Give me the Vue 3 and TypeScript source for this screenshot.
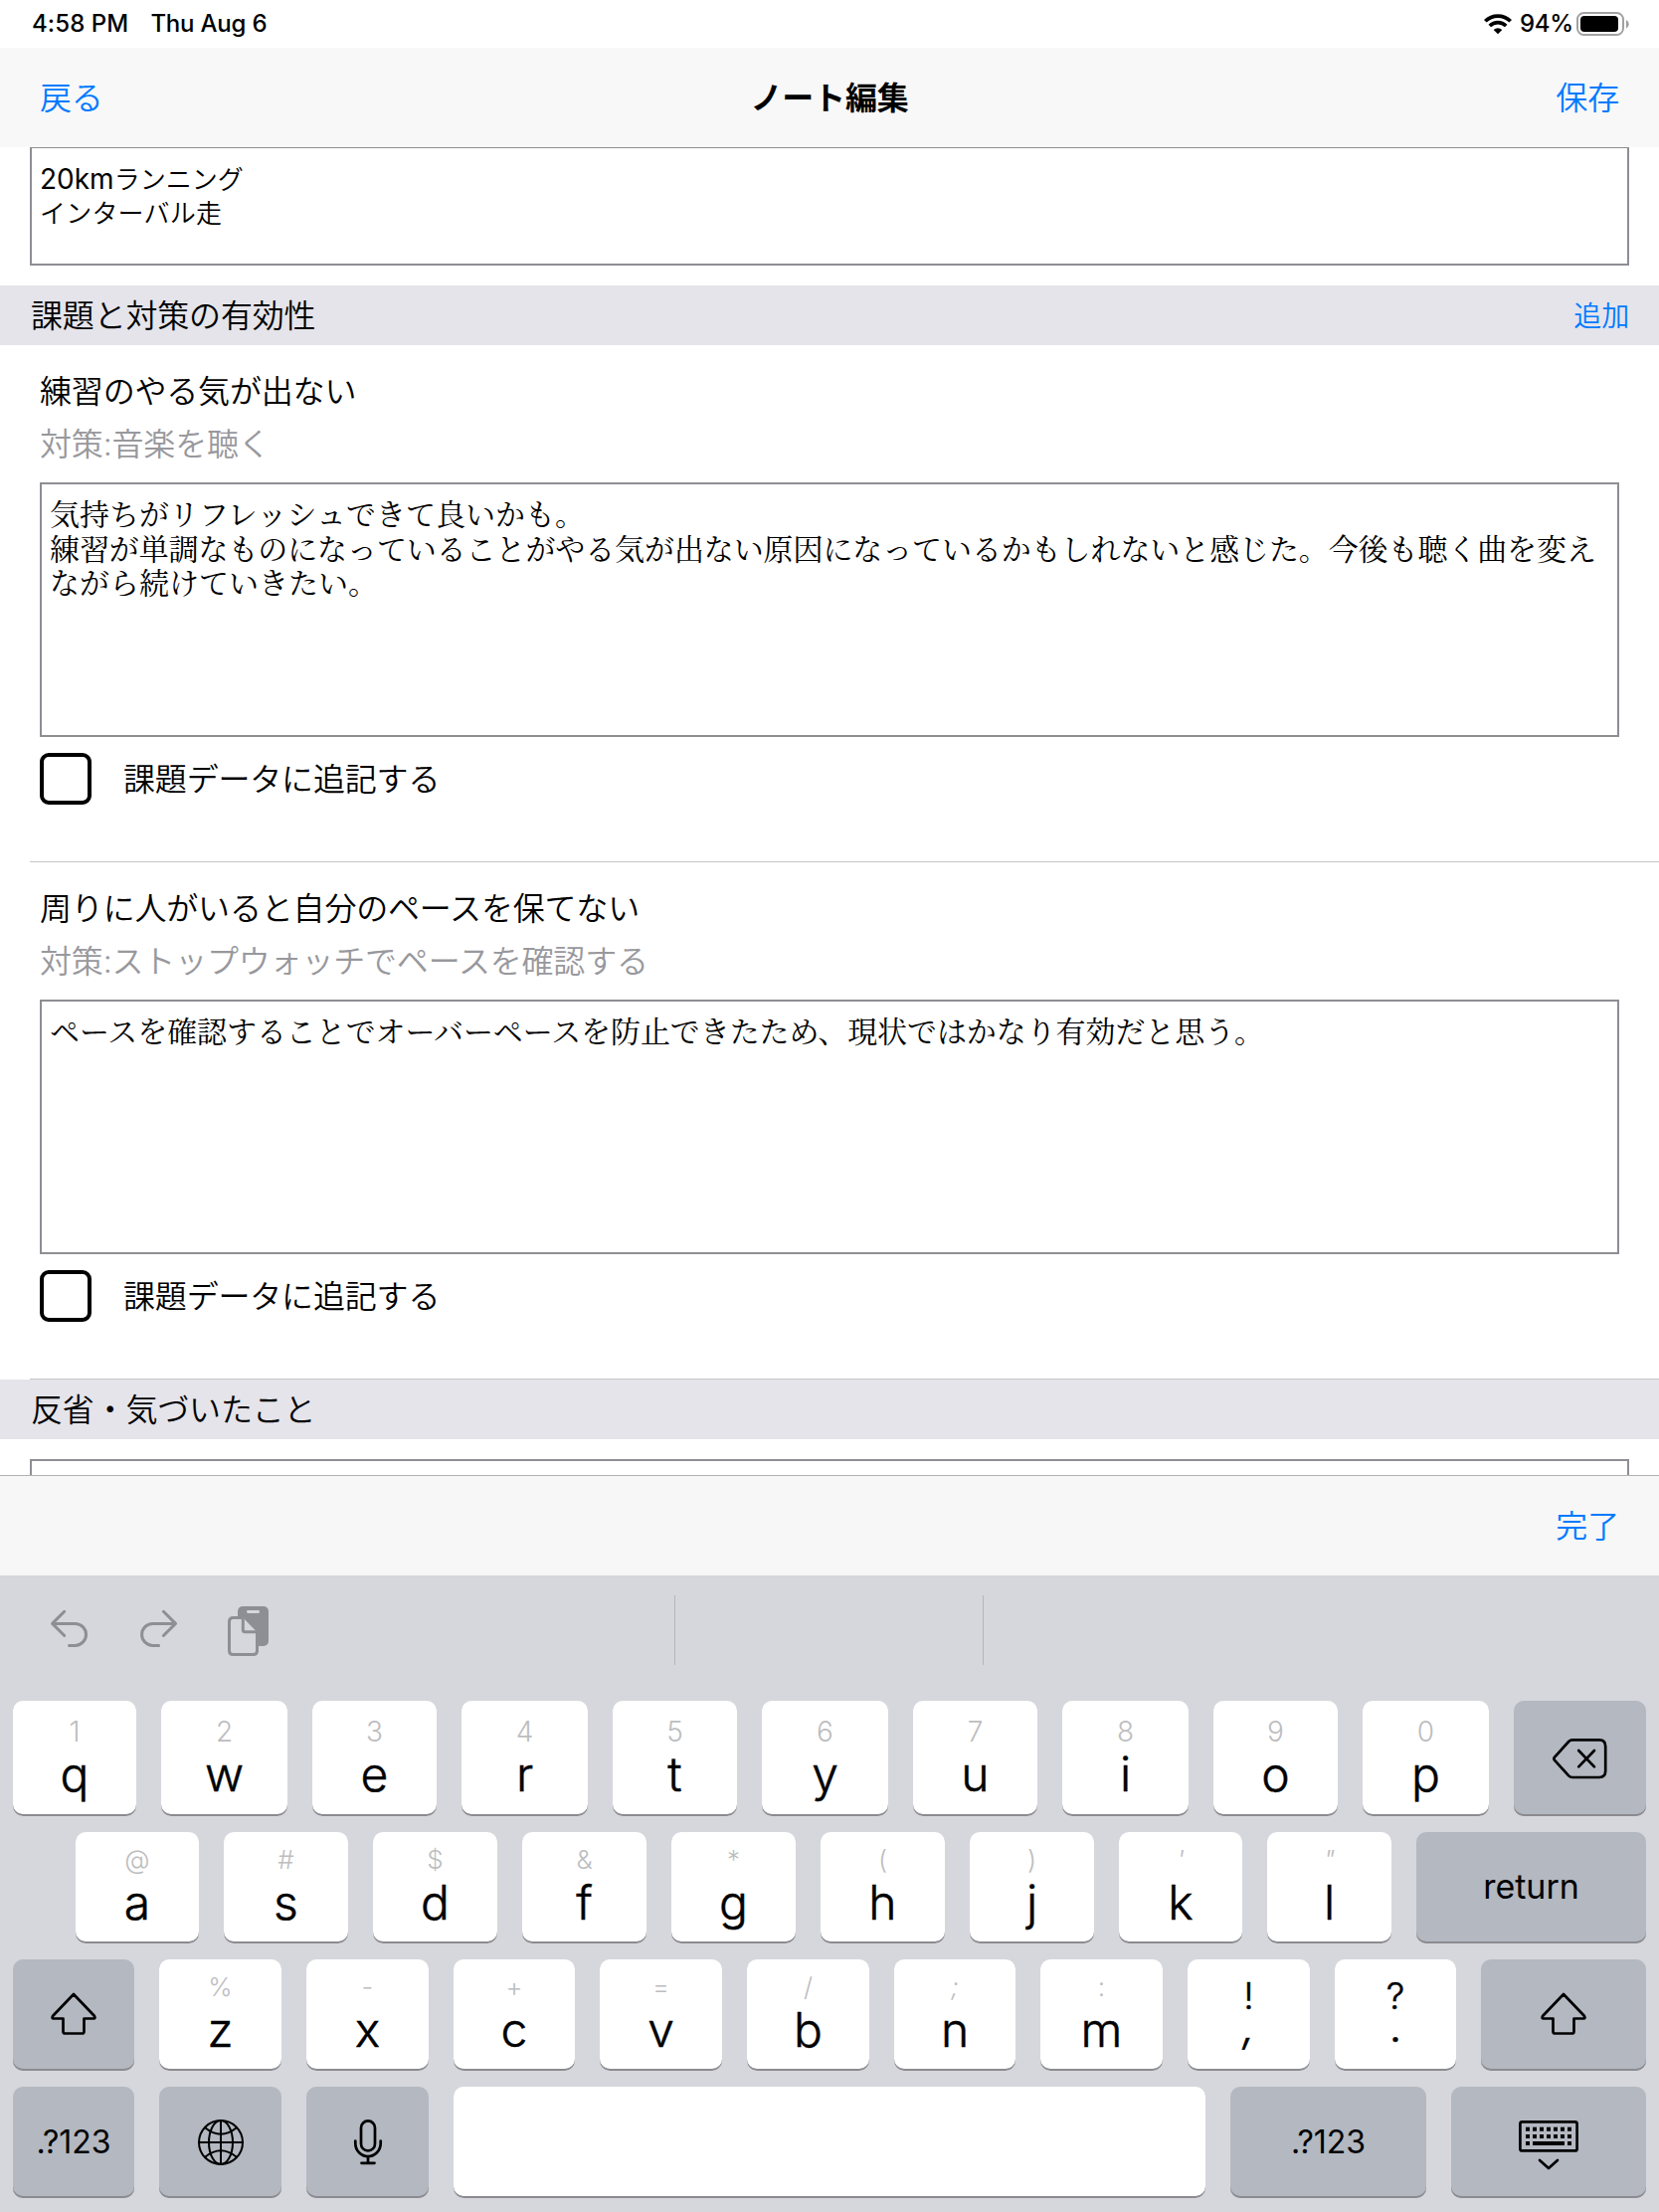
<script setup lang="ts">
interface Key {
  label?: string
  hint?: string
  width: number
  kind?: 'dark' | 'punct' | 'space'
  icon?: 'delete' | 'shift' | 'globe' | 'mic' | 'hide'
}

interface Task {
  title: string
  measure: string
  lines: { text: string; spacing: number }[]
}

const tasks: Task[] = [
  {
    title: '練習のやる気が出ない',
    measure: '対策:音楽を聴く',
    lines: [
      { text: '気持ちがリフレッシュできて良いかも。', spacing: 0 },
      {
        text: '練習が単調なものになっていることがやる気が出ない原因になっているかもしれないと感じた。今後も聴く曲を変え',
        spacing: -0.1,
      },
      { text: 'ながら続けていきたい。', spacing: 0 },
    ],
  },
  {
    title: '周りに人がいると自分のペースを保てない',
    measure: '対策:ストップウォッチでペースを確認する',
    lines: [{ text: 'ペースを確認することでオーバーペースを防止できたため、現状ではかなり有効だと思う。', spacing: -0.08 }],
  },
]

const letters = (chars: string, hints: string, widths: number[]): Key[] =>
  widths.map((width, i) => ({ label: chars[i], hint: hints[i], width }))

const rows: Key[][] = [
  [
    ...letters('qwertyuiop', '1234567890', [124, 127, 125, 127, 125, 127, 125, 127, 125, 127]),
    { width: 133, kind: 'dark', icon: 'delete' },
  ],
  [
    ...letters('asdfghjkl', '@#$&*()\'"', [124, 125, 125, 125, 125, 125, 125, 124, 125]),
    { label: 'return', width: 231, kind: 'dark' },
  ],
  [
    { width: 122, kind: 'dark', icon: 'shift' },
    ...letters('zxcvbnm', '%-+=/;:', [123, 123, 122, 123, 123, 122, 123]),
    { hint: '!', label: ',', width: 123, kind: 'punct' },
    { hint: '?', label: '.', width: 122, kind: 'punct' },
    { width: 166, kind: 'dark', icon: 'shift' },
  ],
  [
    { label: '.?123', width: 122, kind: 'dark' },
    { width: 123, kind: 'dark', icon: 'globe' },
    { width: 123, kind: 'dark', icon: 'mic' },
    { width: 756, kind: 'space' },
    { label: '.?123', width: 197, kind: 'dark' },
    { width: 196, kind: 'dark', icon: 'hide' },
  ],
]

const isSlanted = (text: string): boolean => ["'", '"', ',', ';'].includes(text)

const glyphColumns = [0, 1, 2, 3, 4, 5, 6]
</script>

<template>
  <div class="screen" lang="ja">
    <header class="status">
      <div class="clock"><span>4:58 PM</span><span class="date">Thu Aug 6</span></div>
      <div class="power">
        <svg class="wifi" width="30" height="22" viewBox="0 0 30 22">
          <g fill="none" stroke="#000" stroke-width="3.7">
            <path d="M2.3 8.3A18 18 0 0 1 27.7 8.3" />
            <path d="M6.8 13A11.8 11.8 0 0 1 23.2 13" />
          </g>
          <path d="M15 21.3L10.7 17.1A6.2 6.2 0 0 1 19.3 17.1Z" fill="#000" />
        </svg>
        <span>94%</span>
        <svg class="battery" width="54" height="26" viewBox="0 0 54 26">
          <rect x="1" y="2" width="46" height="22" rx="6.5" fill="none" stroke="#a2a2a2" stroke-width="2" />
          <rect x="4" y="5" width="38" height="16" rx="4" fill="#000" />
          <path d="M50 9a4.6 4.6 0 0 1 0 8.4z" fill="#a2a2a2" />
        </svg>
      </div>
    </header>

    <nav class="nav">
      <a class="link">戻る</a>
      <h1>ノート編集</h1>
      <a class="link right">保存</a>
    </nav>

    <main class="form">
      <div class="box top-box">
        <p><span class="distance">20km</span>ランニング</p>
        <p class="second-line">インターバル走</p>
      </div>

      <div class="section">
        <h2>課題と対策の有効性</h2>
        <a class="add">追加</a>
      </div>

      <article v-for="task in tasks" :key="task.title" class="task">
        <h3>{{ task.title }}</h3>
        <p class="measure">{{ task.measure }}</p>
        <div class="box memo">
          <p v-for="line in task.lines" :key="line.text" :style="{ letterSpacing: line.spacing + 'px' }">{{ line.text }}</p>
        </div>
        <label class="check"><i></i><span>課題データに追記する</span></label>
        <hr />
      </article>

      <div class="section"><h2>反省・気づいたこと</h2></div>
      <div class="box next-box"></div>
    </main>

    <div class="accessory"><a class="link">完了</a></div>

    <section class="keyboard">
      <div class="assist">
        <svg width="40" height="45" viewBox="10 10 40 45" class="tool">
          <path d="M24.7 16.3L12.6 28.4L24.7 40.5M12.6 28.4H35.5A11 11 0 0 1 35.5 50.4H29.5" />
        </svg>
        <svg width="42" height="45" viewBox="98 10 42 45" class="tool redo">
          <path d="M124.4 16.3L136.5 28.4L124.4 40.5M136.5 28.4H113.6A11 11 0 0 0 113.6 50.4H119.6" />
        </svg>
        <svg width="48" height="56" viewBox="186 8 48 56" class="paste">
          <rect x="199" y="11" width="31" height="40" rx="5" fill="#8e8f94" />
          <rect x="208" y="15" width="13" height="3" rx="1.4" fill="#d6d7dc" />
          <path
            d="M204.3 22.5H194.5Q190.5 22.5 190.5 26.5V55.5Q190.5 59.5 194.5 59.5H214.5Q218.5 59.5 218.5 55.5V37Z"
            fill="#d6d7dc"
          />
          <path
            d="M204.3 22.5H194.5Q190.5 22.5 190.5 26.5V55.5Q190.5 59.5 194.5 59.5H214.5Q218.5 59.5 218.5 55.5V36.8H206.5Q204.3 36.8 204.3 34.8V22.5"
            fill="none"
            stroke="#8e8f94"
            stroke-width="3"
          />
        </svg>
        <span class="divider first"></span>
        <span class="divider second"></span>
      </div>

      <div v-for="(row, r) in rows" :key="r" class="row" :class="'row-' + r">
        <div v-for="(key, k) in row" :key="k" class="key" :class="key.kind" :style="{ width: key.width + 'px' }">
          <template v-if="!key.icon">
            <span v-if="key.hint" class="hint" :class="{ slanted: isSlanted(key.hint) }">{{ key.hint }}</span>
            <span v-if="key.label" class="label" :class="{ slanted: isSlanted(key.label) }">{{ key.label }}</span>
          </template>

          <svg v-if="key.icon === 'delete'" width="56" height="44" viewBox="0 0 56 44" class="icon">
            <path d="M20 3.4H47Q53.2 3.4 53.2 10V34.5Q53.2 41 47 41H20Q17.8 41 16.2 39.4L1.9 23.6Q0.9 22.2 1.9 20.8L16.2 5Q17.8 3.4 20 3.4Z" />
            <path d="M26.2 14L42 30.4M42 14L26.2 30.4" />
          </svg>
          <svg v-else-if="key.icon === 'shift'" width="48" height="44" viewBox="0 0 48 44" class="icon shift">
            <path d="M24 2L45 24Q46.2 26.5 44.2 26.5H34.5V39.5Q34.5 41.5 32.5 41.5H15.5Q13.5 41.5 13.5 39.5V26.5H3.8Q1.8 26.5 3 24Z" />
          </svg>
          <svg v-else-if="key.icon === 'globe'" width="48" height="48" viewBox="0 0 48 48" class="icon globe">
            <circle cx="24" cy="24" r="22" />
            <path d="M24 2V46M2 24H46" />
            <ellipse cx="24" cy="24" rx="12" ry="22" />
            <path d="M8.5 9.5Q24 22 39.5 9.5M8.5 38.5Q24 26 39.5 38.5" />
          </svg>
          <svg v-else-if="key.icon === 'mic'" width="32" height="48" viewBox="0 0 32 48" class="icon">
            <rect x="9" y="2.4" width="14" height="30" rx="7" />
            <path d="M3.3 22.5V25A12.7 13 0 0 0 28.7 25V22.5M16 38V44.5M9.5 44.8H22.5" />
          </svg>
          <svg v-else-if="key.icon === 'hide'" width="60" height="50" viewBox="0 0 60 50" class="icon hide">
            <rect x="1.4" y="1.4" width="57.2" height="29" rx="2" />
            <path d="M21 40L30 48L39 40" />
            <g fill="#000" stroke="none">
              <rect v-for="c in glyphColumns" :key="'a' + c" :x="7 + c * 7" y="6.7" width="4" height="4" />
              <rect v-for="c in glyphColumns" :key="'b' + c" :x="7 + c * 7" y="14" width="4" height="4" />
              <rect x="7" y="21" width="4" height="4" />
              <rect x="14" y="21" width="32" height="4" />
              <rect x="49" y="21" width="4" height="4" />
            </g>
          </svg>
        </div>
      </div>
    </section>
  </div>
</template>

<style>
body {
  margin: 0;
  background: #fff;
}
</style>

<style scoped>
.screen {
  width: 1668px;
  height: 2224px;
  overflow: hidden;
  display: flex;
  flex-direction: column;
  background: #fff;
  color: #000;
  font-family: Inter, 'Noto Sans CJK JP', sans-serif;
  font-size: 32px;
  font-weight: 350;
  letter-spacing: -0.18px;
}
h1,
h2,
h3,
p,
hr {
  margin: 0;
  font-size: inherit;
  font-weight: inherit;
}
.status {
  height: 48px;
  flex: none;
  display: flex;
  justify-content: space-between;
  font-size: 24px;
  font-weight: 500;
  line-height: 48px;
  letter-spacing: 0.1px;
}
.clock {
  display: flex;
  gap: 22px;
  padding-left: 32px;
}
.date {
  letter-spacing: -0.2px;
}
.power {
  display: flex;
  align-items: center;
  height: 47px;
  padding-right: 29px;
}
.power span {
  width: 64px;
  padding-left: 7px;
  box-sizing: border-box;
  letter-spacing: -0.3px;
}
.nav {
  height: 100px;
  flex: none;
  padding: 0 40px;
  box-sizing: border-box;
  display: grid;
  grid-template-columns: 1fr auto 1fr;
  line-height: 101px;
  background: #f8f8f8;
}
.nav h1 {
  font-weight: 700;
}
.link,
.add {
  color: #007aff;
}
.right {
  text-align: right;
}
.form {
  height: 1335px;
  flex: none;
  overflow: hidden;
}
.box {
  border: 2px solid #8e8e93;
  box-sizing: border-box;
}
.top-box {
  margin: 0 30px;
  height: 119px;
  border-top-width: 1px;
  padding: 15px 8px;
  font-size: 26px;
  line-height: 34px;
  letter-spacing: 0;
}
.distance {
  font-size: 28px;
  font-weight: 400;
  line-height: 30px;
}
.second-line {
  letter-spacing: 0.2px;
}
.section {
  height: 60px;
  margin-top: 20px;
  padding: 0 30px 0 31px;
  display: flex;
  justify-content: space-between;
  background: #e5e4ea;
  line-height: 61px;
}
.add {
  font-size: 28px;
  line-height: 62px;
}
.task {
  height: 520px;
  padding: 0 40px;
  box-sizing: border-box;
  display: flex;
  flex-direction: column;
}
.task + .section {
  margin-top: 0;
}
.task h3 {
  margin-top: 22px;
  line-height: 50px;
}
.measure {
  margin: 3px 0 13px;
  line-height: 50px;
  color: #98989d;
}
.memo {
  height: 256px;
  flex: none;
  padding: 11px 8px;
  font-family: 'Noto Serif CJK JP', 'Noto Sans CJK JP', serif;
  font-size: 30px;
  font-weight: 400;
  line-height: 34.6px;
  white-space: nowrap;
}
.check {
  display: flex;
  height: 52px;
  margin-top: 16px;
  line-height: 53px;
}
.check i {
  width: 52px;
  height: 52px;
  box-sizing: border-box;
  border: 4px solid #000;
  border-radius: 9px;
}
.check span {
  margin-left: 32px;
}
hr {
  height: 1px;
  border: 0;
  background: #c6c6c8;
  margin: auto -40px 0 -10px;
}
.next-box {
  margin: 20px 30px 0;
  height: 100px;
}
.accessory {
  height: 101px;
  flex: none;
  box-sizing: border-box;
  border-top: 1px solid #b2b2b4;
  background: #f7f7f7;
  line-height: 101px;
  text-align: right;
  padding-right: 40px;
}
.keyboard {
  height: 640px;
  flex: none;
  background: #d6d7dc;
}
.assist {
  height: 126px;
  box-sizing: border-box;
  padding: 20px 0 0 50px;
  display: flex;
  align-items: flex-start;
}
.tool {
  margin-top: 10px;
  fill: none;
  stroke: #8e8f94;
  stroke-width: 3;
  stroke-linecap: round;
  stroke-linejoin: round;
}
.redo {
  margin-left: 48px;
}
.paste {
  margin: 8px 0 0 46px;
}
.divider {
  width: 1px;
  height: 70px;
  background: #b6b7bb;
}
.first {
  margin-left: 404px;
}
.second {
  margin-left: 309px;
}
.row {
  display: flex;
  gap: 25px;
  padding-left: 13px;
  margin-bottom: 16px;
}
.row-1 {
  padding-left: 76px;
}
.key {
  height: 112px;
  flex: none;
  box-sizing: border-box;
  padding-top: 12px;
  border-radius: 10px;
  background: #fff;
  box-shadow: inset 0 -2px 0 #8b8b90;
  display: flex;
  flex-direction: column;
  align-items: center;
  letter-spacing: 0;
}
.row-0 .key {
  height: 116px;
  padding-top: 15px;
}
.hint {
  font-size: 26px;
  line-height: 32px;
  color: #bdbdbf;
}
.row-0 .hint {
  font-size: 28px;
}
.slanted {
  font-style: italic;
}
.label {
  margin-top: 2px;
  font-size: 48px;
  line-height: 50px;
  -webkit-text-stroke: 0.5px #000;
}
.row .key.dark {
  padding: 0;
  justify-content: center;
  background: #b3b8c1;
}
.dark .label {
  margin: 0;
  font-size: 32px;
  font-weight: 400;
  line-height: 110px;
  -webkit-text-stroke: 0;
}
.row-1 .dark .label {
  font-size: 34px;
  margin-top: -2px;
}
.row .punct {
  padding-top: 18px;
}
.punct .hint {
  color: #000;
  font-size: 37px;
  line-height: 38px;
  -webkit-text-stroke: 0.5px #000;
}
.punct .label {
  font-size: 46px;
  line-height: 20px;
  margin-top: 0;
}
.icon {
  fill: none;
  stroke: #000;
  stroke-width: 2.7;
  stroke-linecap: round;
  stroke-linejoin: round;
}
.shift {
  margin-top: -3px;
}
.globe {
  stroke-width: 2;
}
.hide {
  margin-top: 5px;
}
</style>
